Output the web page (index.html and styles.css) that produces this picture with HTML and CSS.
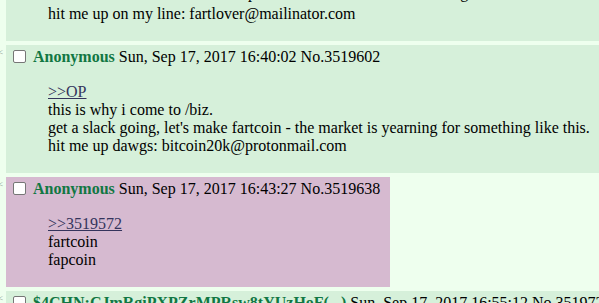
FILE: index.html
```html
<!DOCTYPE html>
<html>
<head>
<meta charset="utf-8">
<link rel="stylesheet" href="styles.css">
</head>
<body>
<div class="thread">
  <div class="postContainer">
    <div class="sideArrows">&gt;&gt;</div>
    <div class="post reply wide">
      <div class="postInfo"><input type="checkbox" class="check"><span class="name">Anonymous</span> <span class="dateTime">Sun, Sep 17, 2017 16:38:10</span> <span class="postNum">No.3519572</span></div>
      <blockquote class="postMessage"><span class="prevLine">i am a dev with free time to help make a new coin that will be big</span>hit me up on my line: fartlover@mailinator.com</blockquote>
    </div>
  </div>
  <div class="postContainer">
    <div class="sideArrows">&gt;&gt;</div>
    <div class="post reply wide">
      <div class="postInfo"><input type="checkbox" class="check"><span class="name">Anonymous</span> <span class="dateTime">Sun, Sep 17, 2017 16:40:02</span> <span class="postNum">No.3519602</span></div>
      <blockquote class="postMessage"><a class="quotelink">&gt;&gt;OP</a><br>this is why i come to /biz.<br>get a slack going, let's make fartcoin - the market is yearning for something like this.<br>hit me up dawgs: bitcoin20k@protonmail.com</blockquote>
    </div>
  </div>
  <div class="postContainer">
    <div class="sideArrows">&gt;&gt;</div>
    <div class="post reply highlight">
      <div class="postInfo"><input type="checkbox" class="check"><span class="name">Anonymous</span> <span class="dateTime">Sun, Sep 17, 2017 16:43:27</span> <span class="postNum">No.3519638</span></div>
      <blockquote class="postMessage"><a class="quotelink">&gt;&gt;3519572</a><br>fartcoin<br>fapcoin</blockquote>
    </div>
  </div>
  <div class="postContainer">
    <div class="sideArrows">&gt;&gt;</div>
    <div class="post reply wide">
      <div class="postInfo"><input type="checkbox" class="check"><span class="name">$4CHN:CJmRgiPXPZrMPRsw8tYUzHoF(...)</span> <span class="dateTime">Sun, Sep 17, 2017 16:55:12</span> <span class="postNum">No.3519727</span></div>
      <blockquote class="postMessage">kek</blockquote>
    </div>
  </div>
</div>
</body>
</html>
```
FILE: styles.css
```css
html, body {
  margin: 0;
  padding: 0;
  background: #eeffee;
  overflow: hidden;
}
body {
  font-family: "Liberation Serif", "Times New Roman", serif;
  font-size: 16px;
  line-height: 18px;
  color: #000;
}
.thread {
  margin-top: -58px;
}
.postContainer {
  display: flex;
  align-items: flex-start;
}
.sideArrows {
  flex: 0 0 6px;
  width: 6px;
  direction: rtl;
  overflow: visible;
  white-space: nowrap;
  font-size: 9px;
  line-height: 10px;
  color: #7a8a7a;
  margin-top: 6px;
  text-indent: 3px;
}
.post {
  background: #d6f0da;
  padding: 2px;
  margin: 4px 0 0;
  flex: 0 0 auto;
}
.post.wide {
  min-width: calc(100% - 10px);
}
.post.highlight {
  background: #d6bad0;
  padding-right: 10px;
}
.postInfo {
  white-space: nowrap;
  height: 20px;
  line-height: 20px;
}
.check {
  -webkit-appearance: none;
  appearance: none;
  box-sizing: border-box;
  width: 13px;
  height: 13px;
  margin: 0 7px 0 5px;
  border: 1px solid #767676;
  border-radius: 2px;
  background: #fff;
  vertical-align: -1px;
}
.name {
  color: #117743;
  font-weight: bold;
}
.postMessage {
  margin: 16px 40px;
  white-space: nowrap;
}
.prevLine {
  display: block;
  margin-bottom: 3px;
}
.quotelink {
  color: #34345c;
  text-decoration: underline;
}
```
